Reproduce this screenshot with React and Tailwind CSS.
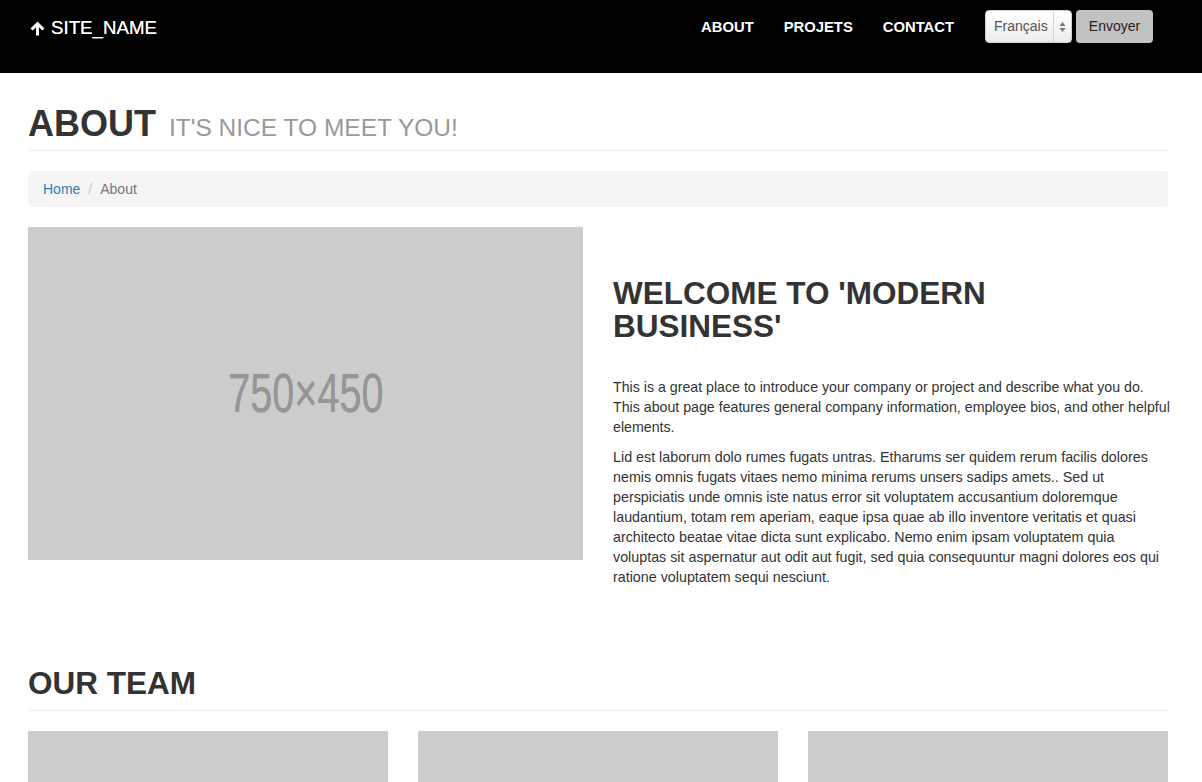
const font = { fontFamily: '"Liberation Sans", Arial, sans-serif' };

function Navbar() {
  return (
    <nav className="bg-black h-[73px] flex items-start justify-between px-[28px]">
      {/* brand */}
      <a className="flex items-center gap-[6px] text-white text-[18.7px] pt-[13px] h-[43px] [text-shadow:0_0_0.4px_white]">
        <svg width="15" height="15" viewBox="0 0 15 15" fill="white" className="mt-[1px] ml-[2px]">
          <path d="M7.5 0.5 L14.5 7.5 L12.3 9.6 L9 6.3 L9 14.5 L6 14.5 L6 6.3 L2.7 9.6 L0.5 7.5 Z" />
        </svg>
        <span>SITE_NAME</span>
      </a>

      {/* links + language form */}
      <div className="flex items-start pt-[10px] pr-[21px]">
        <ul className="flex items-center h-[33px] pt-[2px] text-white font-bold text-[14.8px] mr-[16px]">
          <li className="px-[15px]">ABOUT</li>
          <li className="px-[15px]">PROJETS</li>
          <li className="px-[15px]">CONTACT</li>
        </ul>
        <div className="flex items-center h-[33px] w-[87px] rounded-[4px] border border-[#d0d0d0] bg-gradient-to-b from-white to-[#ececec] shadow-[inset_0_1px_0_#fff]">
          <span className="flex-1 pl-[8px] text-[14px] text-[#555]">Français</span>
          <span className="w-[18px] h-full border-l border-[#d4d4d4] flex items-center justify-center">
            <svg width="7" height="12" viewBox="0 0 7 12" fill="#777">
              <path d="M3.5 1 L6.5 5 L0.5 5 Z" />
              <path d="M3.5 11 L6.5 7 L0.5 7 Z" />
            </svg>
          </span>
        </div>
        <button className="ml-[4px] h-[33px] w-[77px] rounded-[4px] bg-[#c2c2c2] text-[14px] text-[#222]">
          Envoyer
        </button>
      </div>
    </nav>
  );
}

export default function App() {
  return (
    <div className="bg-white text-[#333] min-h-[782px]" style={font}>
      <Navbar />

      <div className="px-[28px] pr-[34px]">
        {/* page header */}
        <div className="pt-[31px] pb-[2px] border-b border-[#eee]">
          <h1 className="text-[36px] leading-[40px] font-bold text-[#333]">
            ABOUT{' '}
            <small className="ml-[3px] text-[24.5px] font-normal text-[#999]">IT'S NICE TO MEET YOU!</small>
          </h1>
        </div>

        {/* breadcrumb */}
        <ol className="mt-[20px] h-[36px] flex items-center px-[15px] bg-[#f5f5f5] rounded-[4px] text-[14px]">
          <li className="text-[#337ab7]">Home</li>
          <li className="px-[8px] text-[#ccc]">/</li>
          <li className="text-[#777]">About</li>
        </ol>

        {/* intro */}
        <div className="mt-[20px] grid grid-cols-2 gap-[30px] items-start">
          <div className="h-[333px] bg-[#ccc] flex items-center justify-center overflow-hidden">
            <span className="text-[55px] text-[#969696] scale-x-[0.72] whitespace-nowrap [text-shadow:0_0_0.6px_#969696]">
              750×450
            </span>
          </div>
          <div className="pt-[50px]">
            <h2 className="max-w-[420px] text-[31.5px] leading-[33px] font-bold">WELCOME TO 'MODERN BUSINESS'</h2>
            <p className="mt-[34px] -mr-[14px] text-[14.2px] leading-[20px]">
              This is a great place to introduce your company or project and describe what you do.
              <br />
              This about page features general company information, employee bios, and other helpful elements.
            </p>
            <p className="mt-[10px] text-[14.3px] leading-[20px]">
              Lid est laborum dolo rumes fugats untras. Etharums ser quidem rerum facilis dolores nemis omnis fugats
              vitaes nemo minima rerums unsers sadips amets.. Sed ut perspiciatis unde omnis iste natus error sit
              voluptatem accusantium doloremque laudantium, totam rem aperiam, eaque ipsa quae ab illo inventore
              veritatis et quasi architecto beatae vitae dicta sunt explicabo. Nemo enim ipsam voluptatem quia voluptas
              sit aspernatur aut odit aut fugit, sed quia consequuntur magni dolores eos qui ratione voluptatem sequi
              nesciunt.
            </p>
          </div>
        </div>

        {/* team */}
        <div className="mt-[80px] pb-[10px] border-b border-[#eee]">
          <h2 className="text-[31.5px] leading-[33px] font-bold">OUR TEAM</h2>
        </div>
        <div className="mt-[20px] grid grid-cols-3 gap-[30px]">
          <div className="h-[200px] bg-[#ccc]" />
          <div className="h-[200px] bg-[#ccc]" />
          <div className="h-[200px] bg-[#ccc]" />
        </div>
      </div>
    </div>
  );
}
